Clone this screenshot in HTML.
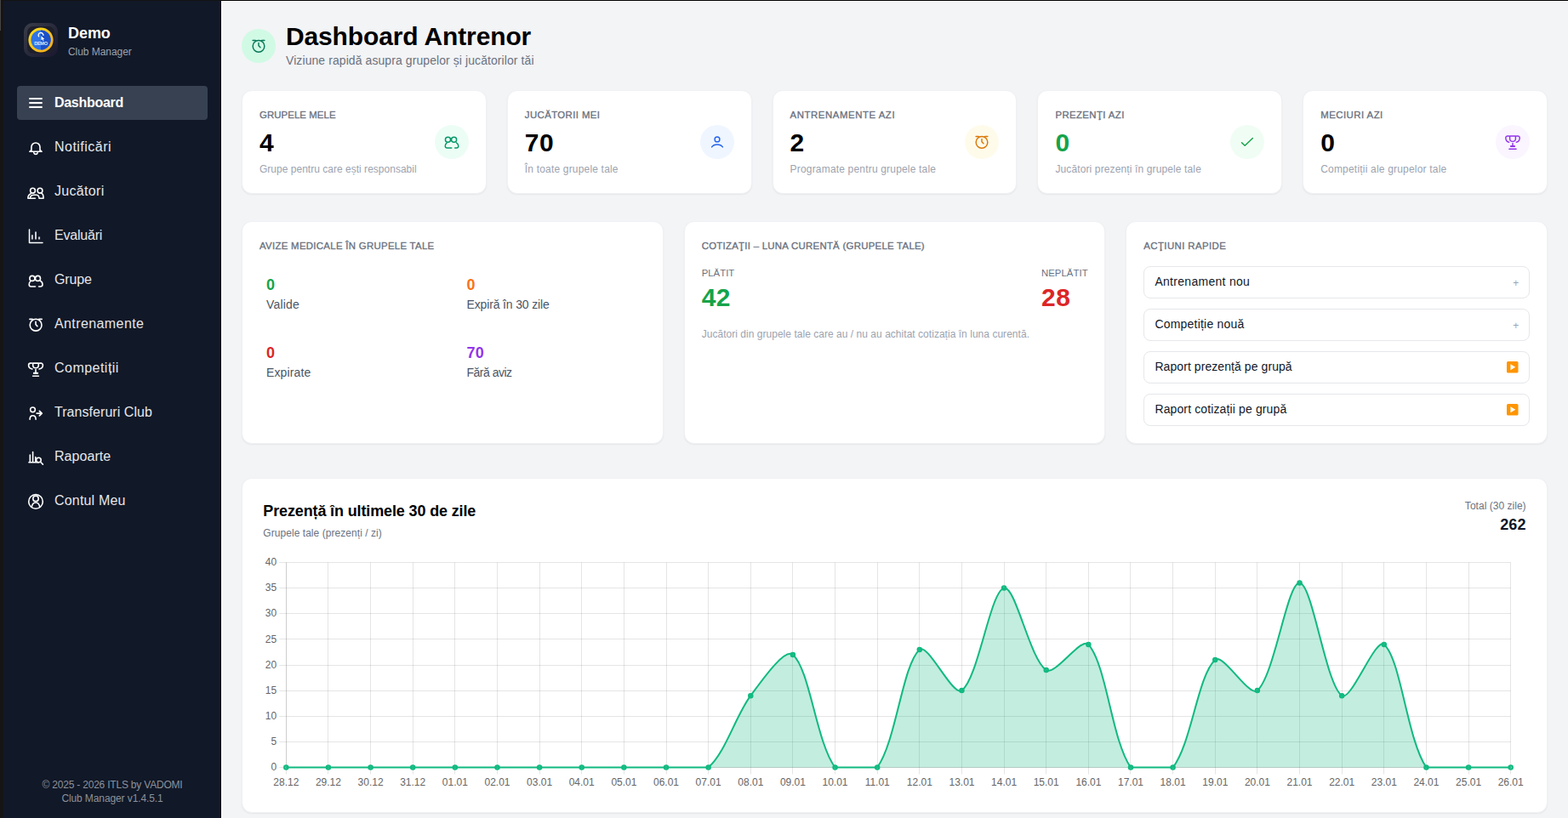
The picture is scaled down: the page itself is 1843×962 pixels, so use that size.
<!DOCTYPE html>
<html lang="ro">
<head>
<meta charset="utf-8">
<title>Dashboard Antrenor</title>
<style>
*{box-sizing:border-box;margin:0;padding:0}
html,body{width:1843px;height:962px;overflow:hidden}
body{position:relative;background:#f3f4f6;font-family:'Liberation Sans',sans-serif;-webkit-font-smoothing:antialiased}
.t{position:absolute;white-space:nowrap;margin:0}
h1.t,h2.t{font-weight:700}
.abs{position:absolute}
.frameL{left:0;top:0;width:4px;height:962px;background:#151515}
.frameL i{position:absolute;left:0;top:0;width:1px;height:36px;background:#454545}
.frameT{left:1px;top:0;width:1842px;height:1px;background:linear-gradient(90deg,#131313 0,#131313 259px,#000 259px)}
.sidebar{left:4px;top:1px;width:256px;height:961px;background:#111827;border-right:1px solid #020617}
.mainedge{left:260px;top:1px;width:1583px;height:961px;border-left:1px solid #fff;border-top:1px solid #fff}
.navact{left:20px;top:101px;width:224px;height:40px;border-radius:4px;background:#374151}
.card{position:absolute;background:#fff;border:1px solid #f0f1f4;border-radius:12px;box-shadow:0 1px 2px rgba(0,0,0,.06)}
.circ{position:absolute;width:40px;height:40px;border-radius:50%}
.circ svg{position:absolute;left:10px;top:10px;width:20px;height:20px}
.btn{position:absolute;left:1344.4px;width:453.6px;height:38px;border:1px solid #e5e7eb;border-radius:8px;background:#fff}
svg{display:block;overflow:visible}
</style>
</head>
<body>
<div class="abs frameL"><i></i></div>
<div class="abs mainedge"></div>

<aside>
<div class="abs sidebar"></div>
<div class="brand"><div class="abs" style="left:28px;top:27px;width:40px;height:40px"><svg width="40" height="40" viewBox="0 0 40 40"><defs><linearGradient id="lg1" x1="0" y1="0" x2="1" y2="1"><stop offset="0" stop-color="#3a3d49"/><stop offset="1" stop-color="#191730"/></linearGradient><linearGradient id="lg2" x1="0" y1="0" x2="1" y2="1"><stop offset="0" stop-color="#ffe21a"/><stop offset="1" stop-color="#f7a81c"/></linearGradient></defs><rect x="0" y="0" width="40" height="40" rx="10" fill="url(#lg1)"/><rect x="4" y="4" width="32" height="32" rx="7" fill="#1e1f2b"/><circle cx="20" cy="20" r="14.6" fill="url(#lg2)"/><circle cx="20" cy="20" r="11.6" fill="#2f74e6"/><path d="M20 8.4a11.6 11.6 0 0 1 0 23.2z" fill="#1b50c8"/><path d="M17.9 16.4a2.9 2.9 0 1 1 5-1.6" fill="none" stroke="#fff" stroke-width="1.35"/><path d="M20.4 15.2v5.2l1.3-1.1 1 2 .9-.4-1-2h1.7z" fill="#fff"/><text x="20" y="26.2" text-anchor="middle" font-family="'Liberation Sans',sans-serif" font-weight="700" font-size="5.6" fill="#dfe9ff" letter-spacing="-0.3">DEMO</text></svg></div>
<div class="t" style="top:27.00px;font-size:18px;line-height:25px;color:#fff;font-weight:700;letter-spacing:-0.057px;left:80.00px;">Demo</div>
<div class="t" style="top:53.00px;font-size:12px;line-height:17px;color:#9ca3af;font-weight:400;letter-spacing:-0.051px;left:80.00px;">Club Manager</div></div>
<nav>
<div class="abs navact"></div>
<a><svg class="abs" style="left:27px;top:106px" viewBox="0 0 30 30" width="30" height="30" fill="none" stroke="#fff" stroke-width="1.6" stroke-linecap="round" stroke-linejoin="round"><path d="M7.3 10H22.7M7.3 15H22.7M7.3 20H22.7" stroke-width="2" stroke-linecap="butt"/></svg><span class="t" style="top:110.00px;font-size:16px;line-height:22px;color:#fff;font-weight:700;letter-spacing:-0.295px;left:64.00px;">Dashboard</span></a>
<a><svg class="abs" style="left:27px;top:158px" viewBox="0 0 30 30" width="30" height="30" fill="none" stroke="#fff" stroke-width="1.6" stroke-linecap="round" stroke-linejoin="round"><path d="M9.9 19.3V15a5.05 5.05 0 0 1 10.1 0v4.3M9.7 18.7L7.9 20.3H22.1L20.3 18.7M12.8 21.7a2.3 2.3 0 0 0 4.4 0"/></svg><span class="t" style="top:162.00px;font-size:16px;line-height:22px;color:#e5e7eb;font-weight:400;letter-spacing:0.476px;left:64.00px;">Notificări</span></a>
<a><svg class="abs" style="left:27px;top:210px" viewBox="0 0 30 30" width="30" height="30" fill="none" stroke="#fff" stroke-width="1.6" stroke-linecap="round" stroke-linejoin="round"><circle cx="11.5" cy="14.2" r="2.9"/><circle cx="20" cy="14.2" r="2.9"/><path d="M5.9 23.2H14.4M5.9 23.2C5.9 20.3 7.2 18.6 9.3 17.8M8.4 22.6C8.8 20.4 10.4 19.3 13 19.3H15.6C17.6 19.3 18.9 20.6 19 23.2H24V21.4C24 19.2 23 17.9 21.9 17.3"/></svg><span class="t" style="top:214.00px;font-size:16px;line-height:22px;color:#e5e7eb;font-weight:400;letter-spacing:0.310px;left:64.00px;">Jucători</span></a>
<a><svg class="abs" style="left:27px;top:262px" viewBox="0 0 30 30" width="30" height="30" fill="none" stroke="#fff" stroke-width="1.6" stroke-linecap="round" stroke-linejoin="round"><path d="M7.5 8.1V23.5H23" stroke-width="1.5"/><path d="M10.9 14.3V19.6M15 10.6V19.6M19.1 16.5V19.6" stroke="#c9ccd3" stroke-width="2" stroke-linecap="butt"/></svg><span class="t" style="top:266.00px;font-size:16px;line-height:22px;color:#e5e7eb;font-weight:400;letter-spacing:-0.214px;left:64.00px;">Evaluări</span></a>
<a><svg class="abs" style="left:27px;top:314px" viewBox="0 0 30 30" width="30" height="30" fill="none" stroke="#fff" stroke-width="1.6" stroke-linecap="round" stroke-linejoin="round"><circle cx="10.9" cy="13.4" r="3"/><circle cx="17.5" cy="13.4" r="3"/><path d="M14.5 23H9.4Q7.2 23 7.2 20.6Q7.2 18 9 16.7M18.6 23H20.6Q23 23 23 20.6Q23 17.6 20.4 16.2"/></svg><span class="t" style="top:318.00px;font-size:16px;line-height:22px;color:#e5e7eb;font-weight:400;letter-spacing:-0.113px;left:64.00px;">Grupe</span></a>
<a><svg class="abs" style="left:27px;top:366px" viewBox="0 0 30 30" width="30" height="30" fill="none" stroke="#fff" stroke-width="1.6" stroke-linecap="round" stroke-linejoin="round"><circle cx="15.1" cy="16.2" r="6.9"/><path d="M15 12.4V15.6L16.9 17.6M7.9 9.4H11.2M18.8 9.4H22.2"/></svg><span class="t" style="top:370.00px;font-size:16px;line-height:22px;color:#e5e7eb;font-weight:400;letter-spacing:0.402px;left:64.00px;">Antrenamente</span></a>
<a><svg class="abs" style="left:27px;top:418px" viewBox="0 0 30 30" width="30" height="30" fill="none" stroke="#fff" stroke-width="1.6" stroke-linecap="round" stroke-linejoin="round"><path d="M11.7 9.1H18.3V11.5A3.3 3.3 0 0 1 11.7 11.5ZM10.3 9.1H8.9A2.3 2.3 0 0 0 6.6 11.4Q6.6 15 10.9 16M19.7 9.1H21.1A2.3 2.3 0 0 1 23.4 11.4Q23.4 15 19.1 16M15 16.6V20M11.6 24.3H18.4"/><path d="M12.9 20.9H17.1" stroke-width="2.1"/></svg><span class="t" style="top:422.00px;font-size:16px;line-height:22px;color:#e5e7eb;font-weight:400;letter-spacing:0.474px;left:64.00px;">Competiții</span></a>
<a><svg class="abs" style="left:27px;top:470px" viewBox="0 0 30 30" width="30" height="30" fill="none" stroke="#fff" stroke-width="1.6" stroke-linecap="round" stroke-linejoin="round"><circle cx="11.5" cy="11.8" r="2.85"/><path d="M8.1 23.2C8.1 20.4 9.3 18.7 11.6 18.7S15.1 20.4 15.1 23.2"/><path d="M16.2 16.1H21.8M19.4 13.4L22.2 16.1L19.4 18.8" stroke-width="1.8"/></svg><span class="t" style="top:474.00px;font-size:16px;line-height:22px;color:#e5e7eb;font-weight:400;letter-spacing:0.055px;left:64.00px;">Transferuri Club</span></a>
<a><svg class="abs" style="left:27px;top:522px" viewBox="0 0 30 30" width="30" height="30" fill="none" stroke="#fff" stroke-width="1.6" stroke-linecap="round" stroke-linejoin="round"><path d="M6.9 21.8H18.5M8.3 21.5V13M11.6 21.5V9.6M14.8 21V15.6"/><circle cx="18.4" cy="19" r="2.8"/><path d="M20.6 21.3L23.4 24.1"/></svg><span class="t" style="top:526.00px;font-size:16px;line-height:22px;color:#e5e7eb;font-weight:400;letter-spacing:0.062px;left:64.00px;">Rapoarte</span></a>
<a><svg class="abs" style="left:27px;top:574px" viewBox="0 0 30 30" width="30" height="30" fill="none" stroke="#fff" stroke-width="1.6" stroke-linecap="round" stroke-linejoin="round"><circle cx="15" cy="15.9" r="8.3"/><circle cx="15" cy="12.4" r="3.2"/><path d="M10.2 22.4C10.7 19.2 12.4 17 15 17S19.3 19.2 19.8 22.4"/></svg><span class="t" style="top:578.00px;font-size:16px;line-height:22px;color:#e5e7eb;font-weight:400;letter-spacing:0.181px;left:64.00px;">Contul Meu</span></a>
</nav>
<footer><div class="t" style="top:915.00px;font-size:12px;line-height:17px;color:#8d929b;font-weight:400;letter-spacing:-0.205px;left:-18.00px;width:300px;text-align:center;">© 2025 - 2026 ITLS by VADOMI</div>
<div class="t" style="top:931.00px;font-size:12px;line-height:17px;color:#8d929b;font-weight:400;letter-spacing:-0.103px;left:-18.00px;width:300px;text-align:center;">Club Manager v1.4.5.1</div></footer>
</aside>
<main>
<header><div class="circ" style="left:284px;top:34px;background:#d1fae5"><svg viewBox="0 0 20 20" width="20" height="20" fill="none" stroke="#047857" stroke-width="1.45" stroke-linecap="round" stroke-linejoin="round"><circle cx="10" cy="10.3" r="6.85"/><path d="M10 6.4V9.7L12 11.7M3.1 3.5H6.3M13.7 3.5H16.9"/></svg></div>
<h1 class="t" style="top:22.00px;font-size:30px;line-height:42px;color:#000;font-weight:700;letter-spacing:-0.137px;left:336.00px;">Dashboard Antrenor</h1>
<p class="t" style="top:61.00px;font-size:14px;line-height:20px;color:#6b7280;font-weight:400;letter-spacing:0.080px;left:336.00px;">Viziune rapidă asupra grupelor și jucătorilor tăi</p></header>
<section class="stats">
<article><div class="card" style="left:284.00px;top:106px;width:287.8px;height:122px"></div>
<div class="t" style="top:127.00px;font-size:11.4px;line-height:17px;color:#6b7280;font-weight:400;-webkit-text-stroke:0.35px currentColor;letter-spacing:0.080px;left:305.00px;">GRUPELE MELE</div>
<div class="t" style="top:147.00px;font-size:30px;line-height:42px;color:#000;font-weight:700;left:305.00px;">4</div>
<div class="t" style="top:191.00px;font-size:12px;line-height:17px;color:#9ca3af;font-weight:400;letter-spacing:0.017px;left:305.00px;">Grupe pentru care ești responsabil</div>
<div class="circ" style="left:510.80px;top:147.4px;background:#ecfdf5"><svg viewBox="0 0 20 20" width="20" height="20" fill="none" stroke="#059669" stroke-width="1.45" stroke-linecap="round" stroke-linejoin="round"><circle cx="5.5" cy="7.2" r="3.05"/><circle cx="12.6" cy="7.2" r="3.05"/><path d="M9.8 17H4.6Q2.3 17 2.3 14.7Q2.3 12.4 4.1 11.1M13.7 17H15.6Q17.8 17 17.8 14.7Q17.8 12.2 15.5 10.8"/></svg></div></article>
<article><div class="card" style="left:595.80px;top:106px;width:287.8px;height:122px"></div>
<div class="t" style="top:127.00px;font-size:11.4px;line-height:17px;color:#6b7280;font-weight:400;-webkit-text-stroke:0.35px currentColor;letter-spacing:0.409px;left:616.80px;">JUCĂTORII MEI</div>
<div class="t" style="top:147.00px;font-size:30px;line-height:42px;color:#000;font-weight:700;letter-spacing:0.469px;left:616.80px;">70</div>
<div class="t" style="top:191.00px;font-size:12px;line-height:17px;color:#9ca3af;font-weight:400;letter-spacing:0.182px;left:616.80px;">În toate grupele tale</div>
<div class="circ" style="left:822.60px;top:147.4px;background:#eff6ff"><svg viewBox="0 0 20 20" width="20" height="20" fill="none" stroke="#2563eb" stroke-width="1.45" stroke-linecap="round" stroke-linejoin="round"><circle cx="10" cy="6.9" r="2.9"/><path d="M3.6 15.9C5 13.6 7.3 12.9 10 12.9S15 13.6 16.4 15.9"/></svg></div></article>
<article><div class="card" style="left:907.60px;top:106px;width:287.8px;height:122px"></div>
<div class="t" style="top:127.00px;font-size:11.4px;line-height:17px;color:#6b7280;font-weight:400;-webkit-text-stroke:0.35px currentColor;letter-spacing:0.560px;left:928.60px;">ANTRENAMENTE AZI</div>
<div class="t" style="top:147.00px;font-size:30px;line-height:42px;color:#000;font-weight:700;left:928.60px;">2</div>
<div class="t" style="top:191.00px;font-size:12px;line-height:17px;color:#9ca3af;font-weight:400;letter-spacing:0.182px;left:928.60px;">Programate pentru grupele tale</div>
<div class="circ" style="left:1134.40px;top:147.4px;background:#fffbeb"><svg viewBox="0 0 20 20" width="20" height="20" fill="none" stroke="#d97706" stroke-width="1.45" stroke-linecap="round" stroke-linejoin="round"><circle cx="10" cy="10.3" r="6.85"/><path d="M10 6.4V9.7L12 11.7M3.1 3.5H6.3M13.7 3.5H16.9"/></svg></div></article>
<article><div class="card" style="left:1219.40px;top:106px;width:287.8px;height:122px"></div>
<div class="t" style="top:127.00px;font-size:11.4px;line-height:17px;color:#6b7280;font-weight:400;-webkit-text-stroke:0.35px currentColor;letter-spacing:0.397px;left:1240.40px;">PREZENŢI AZI</div>
<div class="t" style="top:147.00px;font-size:30px;line-height:42px;color:#16a34a;font-weight:700;left:1240.40px;">0</div>
<div class="t" style="top:191.00px;font-size:12px;line-height:17px;color:#9ca3af;font-weight:400;letter-spacing:0.125px;left:1240.40px;">Jucători prezenți în grupele tale</div>
<div class="circ" style="left:1446.20px;top:147.4px;background:#f0fdf4"><svg viewBox="0 0 20 20" width="20" height="20" fill="none" stroke="#16a34a" stroke-width="1.45" stroke-linecap="round" stroke-linejoin="round"><path d="M3.5 10.7L7.2 14.3L16.4 5.4"/></svg></div></article>
<article><div class="card" style="left:1531.20px;top:106px;width:287.8px;height:122px"></div>
<div class="t" style="top:127.00px;font-size:11.4px;line-height:17px;color:#6b7280;font-weight:400;-webkit-text-stroke:0.35px currentColor;letter-spacing:0.468px;left:1552.20px;">MECIURI AZI</div>
<div class="t" style="top:147.00px;font-size:30px;line-height:42px;color:#000;font-weight:700;left:1552.20px;">0</div>
<div class="t" style="top:191.00px;font-size:12px;line-height:17px;color:#9ca3af;font-weight:400;letter-spacing:0.195px;left:1552.20px;">Competiții ale grupelor tale</div>
<div class="circ" style="left:1758.00px;top:147.4px;background:#faf5ff"><svg viewBox="0 0 20 20" width="20" height="20" fill="none" stroke="#9333ea" stroke-width="1.45" stroke-linecap="round" stroke-linejoin="round"><path d="M6.6 2.9H13.4V6A3.4 3.4 0 0 1 6.6 6ZM5.4 2.9H4A2.2 2.2 0 0 0 1.8 5.1Q1.8 9.4 5.6 10.3M14.6 2.9H16A2.2 2.2 0 0 1 18.2 5.1Q18.2 9.4 14.4 10.3M10 11.4V14.2M5.9 18.2H14.1"/><path d="M7.9 15H12.1" stroke-width="2.1"/></svg></div></article>
</section>
<section class="panels">
<article><div class="card" style="left:284.00px;top:260px;width:495.67px;height:262px"></div><div class="t" style="top:281.00px;font-size:11.4px;line-height:17px;color:#6b7280;font-weight:400;-webkit-text-stroke:0.35px currentColor;letter-spacing:0.309px;left:305.00px;">AVIZE MEDICALE ÎN GRUPELE TALE</div>
<div class="t" style="top:323.00px;font-size:18px;line-height:25px;color:#16a34a;font-weight:700;left:313.00px;">0</div>
<div class="t" style="top:348.00px;font-size:14px;line-height:20px;color:#4b5563;font-weight:400;letter-spacing:0.191px;left:313.00px;">Valide</div>
<div class="t" style="top:323.00px;font-size:18px;line-height:25px;color:#f97316;font-weight:700;left:548.50px;">0</div>
<div class="t" style="top:348.00px;font-size:14px;line-height:20px;color:#4b5563;font-weight:400;letter-spacing:-0.150px;left:548.50px;">Expiră în 30 zile</div>
<div class="t" style="top:403.00px;font-size:18px;line-height:25px;color:#dc2626;font-weight:700;left:313.00px;">0</div>
<div class="t" style="top:428.00px;font-size:14px;line-height:20px;color:#4b5563;font-weight:400;letter-spacing:0.143px;left:313.00px;">Expirate</div>
<div class="t" style="top:403.00px;font-size:18px;line-height:25px;color:#9333ea;font-weight:700;letter-spacing:0.281px;left:548.50px;">70</div>
<div class="t" style="top:428.00px;font-size:14px;line-height:20px;color:#4b5563;font-weight:400;letter-spacing:-0.500px;left:548.50px;">Fără aviz</div></article>
<article><div class="card" style="left:803.67px;top:260px;width:495.67px;height:262px"></div><div class="t" style="top:281.00px;font-size:11.4px;line-height:17px;color:#6b7280;font-weight:400;-webkit-text-stroke:0.35px currentColor;letter-spacing:0.277px;left:824.67px;">COTIZAŢII – LUNA CURENTĂ (GRUPELE TALE)</div>
<div class="t" style="top:313.00px;font-size:11.4px;line-height:17px;color:#6b7280;font-weight:400;letter-spacing:0.012px;left:824.67px;">PLĂTIT</div>
<div class="t" style="top:329.00px;font-size:30px;line-height:42px;color:#16a34a;font-weight:700;letter-spacing:0.469px;left:824.67px;">42</div>
<div class="t" style="top:313.00px;font-size:11.4px;line-height:17px;color:#6b7280;font-weight:400;letter-spacing:0.022px;left:1224.00px;">NEPLĂTIT</div>
<div class="t" style="top:329.00px;font-size:30px;line-height:42px;color:#dc2626;font-weight:700;letter-spacing:0.469px;left:1224.00px;">28</div>
<div class="t" style="top:385.00px;font-size:12px;line-height:17px;color:#9ca3af;font-weight:400;letter-spacing:0.032px;left:824.67px;">Jucători din grupele tale care au / nu au achitat cotizația în luna curentă.</div></article>
<article><div class="card" style="left:1323.34px;top:260px;width:495.67px;height:262px"></div><div class="t" style="top:281.00px;font-size:11.4px;line-height:17px;color:#6b7280;font-weight:400;-webkit-text-stroke:0.35px currentColor;letter-spacing:0.414px;left:1344.34px;">ACŢIUNI RAPIDE</div>
<a><div class="btn" style="top:313.2px"></div><span class="t" style="top:321.00px;font-size:14px;line-height:20px;color:#111827;font-weight:400;letter-spacing:0.292px;left:1357.40px;">Antrenament nou</span>
<span class="t" style="top:325.00px;font-size:12px;line-height:17px;color:#9ca3af;font-weight:400;right:57.70px;">+</span></a>
<a><div class="btn" style="top:363.2px"></div><span class="t" style="top:371.00px;font-size:14px;line-height:20px;color:#111827;font-weight:400;letter-spacing:0.209px;left:1357.40px;">Competiție nouă</span>
<span class="t" style="top:375.00px;font-size:12px;line-height:17px;color:#9ca3af;font-weight:400;right:57.70px;">+</span></a>
<a><div class="btn" style="top:413.2px"></div><span class="t" style="top:421.00px;font-size:14px;line-height:20px;color:#111827;font-weight:400;letter-spacing:0.074px;left:1357.40px;">Raport prezență pe grupă</span><span class="abs" style="left:1771px;top:425px;width:13.5px;height:13.5px"><svg width="13.5" height="13.5" viewBox="0 0 14 14"><rect width="14" height="14" rx="1.6" fill="#ff9500"/><path d="M4.6 3.4v7.2L10.6 7z" fill="#fff"/></svg></span></a>
<a><div class="btn" style="top:463.2px"></div><span class="t" style="top:471.00px;font-size:14px;line-height:20px;color:#111827;font-weight:400;letter-spacing:0.128px;left:1357.40px;">Raport cotizații pe grupă</span><span class="abs" style="left:1771px;top:475px;width:13.5px;height:13.5px"><svg width="13.5" height="13.5" viewBox="0 0 14 14"><rect width="14" height="14" rx="1.6" fill="#ff9500"/><path d="M4.6 3.4v7.2L10.6 7z" fill="#fff"/></svg></span></a>
</article>
</section>
<section class="chart">
<div class="card" style="left:284px;top:562px;width:1535px;height:394px"></div>
<h2 class="t" style="top:589.00px;font-size:18px;line-height:25px;color:#000;font-weight:700;letter-spacing:-0.134px;left:309.30px;">Prezență în ultimele 30 de zile</h2>
<p class="t" style="top:619.00px;font-size:12px;line-height:17px;color:#6b7280;font-weight:400;letter-spacing:0.053px;left:309.30px;">Grupele tale (prezenți / zi)</p>
<div class="t" style="top:587.00px;font-size:12px;line-height:17px;color:#6b7280;font-weight:400;letter-spacing:0.027px;right:49.37px;">Total (30 zile)</div>
<div class="t" style="top:605.00px;font-size:18px;line-height:25px;color:#111827;font-weight:700;letter-spacing:0.211px;right:49.19px;">262</div>
<svg class="abs" style="left:0;top:0" width="1843" height="962" viewBox="0 0 1843 962"><path d="M336.5 661.5V910.5M385.5 661.5V910.5M435.5 661.5V910.5M485.5 661.5V910.5M534.5 661.5V910.5M584.5 661.5V910.5M634.5 661.5V910.5M683.5 661.5V910.5M733.5 661.5V910.5M783.5 661.5V910.5M832.5 661.5V910.5M882.5 661.5V910.5M931.5 661.5V910.5M981.5 661.5V910.5M1031.5 661.5V910.5M1080.5 661.5V910.5M1130.5 661.5V910.5M1180.5 661.5V910.5M1229.5 661.5V910.5M1279.5 661.5V910.5M1328.5 661.5V910.5M1378.5 661.5V910.5M1428.5 661.5V910.5M1477.5 661.5V910.5M1527.5 661.5V910.5M1577.5 661.5V910.5M1626.5 661.5V910.5M1676.5 661.5V910.5M1726.5 661.5V910.5M1775.5 661.5V910.5M328.3 902.5H1775.7M328.3 872.5H1775.7M328.3 842.5H1775.7M328.3 812.5H1775.7M328.3 782.5H1775.7M328.3 751.5H1775.7M328.3 721.5H1775.7M328.3 691.5H1775.7M328.3 661.5H1775.7" fill="none" stroke="#000" stroke-opacity="0.1" stroke-width="1"/>
<path d="M336.5 661.5V902.5M336.3 902.5H1775.7" fill="none" stroke="#000" stroke-opacity="0.1" stroke-width="1"/>
<path d="M336.30 902.50 C351.19 902.50 371.04 902.50 385.93 902.50 C400.82 902.50 420.68 902.50 435.57 902.50 C450.46 902.50 470.31 902.50 485.20 902.50 C500.09 902.50 519.95 902.50 534.84 902.50 C549.73 902.50 569.58 902.50 584.47 902.50 C599.36 902.50 619.22 902.50 634.11 902.50 C649.00 902.50 668.85 902.50 683.74 902.50 C698.63 902.50 718.49 902.50 733.38 902.50 C748.27 902.50 768.12 902.50 783.01 902.50 C797.90 902.50 822.62 902.50 832.64 902.50 C852.40 885.71 864.83 841.45 882.28 818.15 C894.61 801.68 922.14 761.64 931.91 769.95 C951.92 786.95 959.50 873.06 981.55 902.50 C989.28 902.50 1023.67 902.50 1031.18 902.50 C1053.45 871.41 1060.56 782.37 1080.82 763.92 C1090.34 755.26 1120.12 819.65 1130.45 812.12 C1149.90 797.96 1163.83 695.57 1180.09 691.62 C1193.61 688.34 1210.33 775.08 1229.72 788.02 C1240.11 794.96 1271.16 748.45 1279.36 757.90 C1300.94 782.79 1306.51 869.75 1328.99 902.50 C1336.29 902.50 1370.66 902.50 1378.62 902.50 C1400.44 874.70 1407.75 794.65 1428.26 775.98 C1437.53 767.54 1468.63 820.56 1477.89 812.12 C1498.41 793.45 1512.94 684.71 1527.53 685.60 C1542.72 686.52 1557.97 804.17 1577.16 818.15 C1587.75 825.86 1616.73 749.35 1626.80 757.90 C1646.51 774.65 1653.95 869.75 1676.43 902.50 C1683.73 902.50 1711.18 902.50 1726.07 902.50 C1740.96 902.50 1760.81 902.50 1775.70 902.50 L1775.70 902.50 L336.30 902.50 Z" fill="rgba(16,185,129,0.25)" stroke="none"/>
<path d="M336.30 902.50 C351.19 902.50 371.04 902.50 385.93 902.50 C400.82 902.50 420.68 902.50 435.57 902.50 C450.46 902.50 470.31 902.50 485.20 902.50 C500.09 902.50 519.95 902.50 534.84 902.50 C549.73 902.50 569.58 902.50 584.47 902.50 C599.36 902.50 619.22 902.50 634.11 902.50 C649.00 902.50 668.85 902.50 683.74 902.50 C698.63 902.50 718.49 902.50 733.38 902.50 C748.27 902.50 768.12 902.50 783.01 902.50 C797.90 902.50 822.62 902.50 832.64 902.50 C852.40 885.71 864.83 841.45 882.28 818.15 C894.61 801.68 922.14 761.64 931.91 769.95 C951.92 786.95 959.50 873.06 981.55 902.50 C989.28 902.50 1023.67 902.50 1031.18 902.50 C1053.45 871.41 1060.56 782.37 1080.82 763.92 C1090.34 755.26 1120.12 819.65 1130.45 812.12 C1149.90 797.96 1163.83 695.57 1180.09 691.62 C1193.61 688.34 1210.33 775.08 1229.72 788.02 C1240.11 794.96 1271.16 748.45 1279.36 757.90 C1300.94 782.79 1306.51 869.75 1328.99 902.50 C1336.29 902.50 1370.66 902.50 1378.62 902.50 C1400.44 874.70 1407.75 794.65 1428.26 775.98 C1437.53 767.54 1468.63 820.56 1477.89 812.12 C1498.41 793.45 1512.94 684.71 1527.53 685.60 C1542.72 686.52 1557.97 804.17 1577.16 818.15 C1587.75 825.86 1616.73 749.35 1626.80 757.90 C1646.51 774.65 1653.95 869.75 1676.43 902.50 C1683.73 902.50 1711.18 902.50 1726.07 902.50 C1740.96 902.50 1760.81 902.50 1775.70 902.50" fill="none" stroke="#10b981" stroke-width="2" stroke-linejoin="round"/>
<g fill="rgba(16,185,129,0.6)" stroke="#10b981" stroke-width="2"><circle cx="336.30" cy="902.50" r="2.25"/><circle cx="385.93" cy="902.50" r="2.25"/><circle cx="435.57" cy="902.50" r="2.25"/><circle cx="485.20" cy="902.50" r="2.25"/><circle cx="534.84" cy="902.50" r="2.25"/><circle cx="584.47" cy="902.50" r="2.25"/><circle cx="634.11" cy="902.50" r="2.25"/><circle cx="683.74" cy="902.50" r="2.25"/><circle cx="733.38" cy="902.50" r="2.25"/><circle cx="783.01" cy="902.50" r="2.25"/><circle cx="832.64" cy="902.50" r="2.25"/><circle cx="882.28" cy="818.15" r="2.25"/><circle cx="931.91" cy="769.95" r="2.25"/><circle cx="981.55" cy="902.50" r="2.25"/><circle cx="1031.18" cy="902.50" r="2.25"/><circle cx="1080.82" cy="763.92" r="2.25"/><circle cx="1130.45" cy="812.12" r="2.25"/><circle cx="1180.09" cy="691.62" r="2.25"/><circle cx="1229.72" cy="788.02" r="2.25"/><circle cx="1279.36" cy="757.90" r="2.25"/><circle cx="1328.99" cy="902.50" r="2.25"/><circle cx="1378.62" cy="902.50" r="2.25"/><circle cx="1428.26" cy="775.98" r="2.25"/><circle cx="1477.89" cy="812.12" r="2.25"/><circle cx="1527.53" cy="685.60" r="2.25"/><circle cx="1577.16" cy="818.15" r="2.25"/><circle cx="1626.80" cy="757.90" r="2.25"/><circle cx="1676.43" cy="902.50" r="2.25"/><circle cx="1726.07" cy="902.50" r="2.25"/><circle cx="1775.70" cy="902.50" r="2.25"/></g>
<g font-family="'Liberation Sans', sans-serif" font-size="12" fill="#666"><text x="336.3" y="924.1" text-anchor="middle">28.12</text><text x="385.9" y="924.1" text-anchor="middle">29.12</text><text x="435.6" y="924.1" text-anchor="middle">30.12</text><text x="485.2" y="924.1" text-anchor="middle">31.12</text><text x="534.8" y="924.1" text-anchor="middle">01.01</text><text x="584.5" y="924.1" text-anchor="middle">02.01</text><text x="634.1" y="924.1" text-anchor="middle">03.01</text><text x="683.7" y="924.1" text-anchor="middle">04.01</text><text x="733.4" y="924.1" text-anchor="middle">05.01</text><text x="783.0" y="924.1" text-anchor="middle">06.01</text><text x="832.6" y="924.1" text-anchor="middle">07.01</text><text x="882.3" y="924.1" text-anchor="middle">08.01</text><text x="931.9" y="924.1" text-anchor="middle">09.01</text><text x="981.5" y="924.1" text-anchor="middle">10.01</text><text x="1031.2" y="924.1" text-anchor="middle">11.01</text><text x="1080.8" y="924.1" text-anchor="middle">12.01</text><text x="1130.5" y="924.1" text-anchor="middle">13.01</text><text x="1180.1" y="924.1" text-anchor="middle">14.01</text><text x="1229.7" y="924.1" text-anchor="middle">15.01</text><text x="1279.4" y="924.1" text-anchor="middle">16.01</text><text x="1329.0" y="924.1" text-anchor="middle">17.01</text><text x="1378.6" y="924.1" text-anchor="middle">18.01</text><text x="1428.3" y="924.1" text-anchor="middle">19.01</text><text x="1477.9" y="924.1" text-anchor="middle">20.01</text><text x="1527.5" y="924.1" text-anchor="middle">21.01</text><text x="1577.2" y="924.1" text-anchor="middle">22.01</text><text x="1626.8" y="924.1" text-anchor="middle">23.01</text><text x="1676.4" y="924.1" text-anchor="middle">24.01</text><text x="1726.1" y="924.1" text-anchor="middle">25.01</text><text x="1775.7" y="924.1" text-anchor="middle">26.01</text><text x="325.1" y="906.1" text-anchor="end">0</text><text x="325.1" y="876.0" text-anchor="end">5</text><text x="325.1" y="845.9" text-anchor="end">10</text><text x="325.1" y="815.7" text-anchor="end">15</text><text x="325.1" y="785.6" text-anchor="end">20</text><text x="325.1" y="755.5" text-anchor="end">25</text><text x="325.1" y="725.4" text-anchor="end">30</text><text x="325.1" y="695.2" text-anchor="end">35</text><text x="325.1" y="665.1" text-anchor="end">40</text></g></svg>
</section>
</main>
<div class="abs frameT"></div>
</body>
</html>
